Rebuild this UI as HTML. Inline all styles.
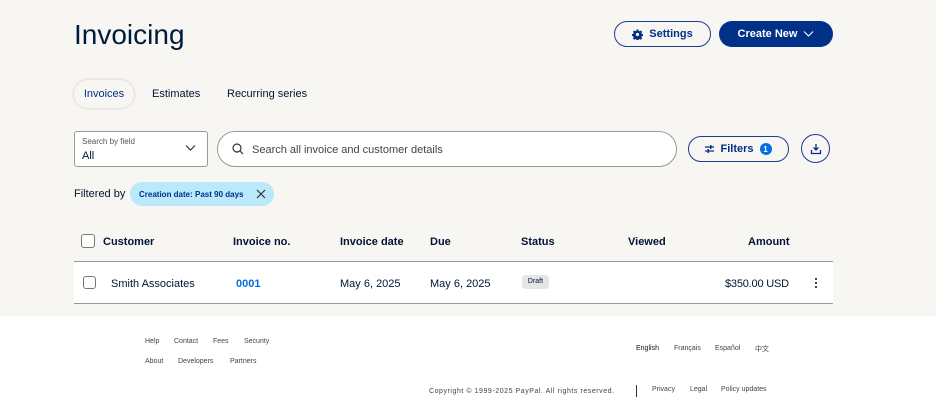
<!DOCTYPE html>
<html><head><meta charset="utf-8"><style>
*{box-sizing:border-box;margin:0;padding:0}
body{width:936px;height:410px;background:#fff;font-family:"Liberation Sans",sans-serif;color:#001435;position:relative;overflow:hidden}
.top{position:absolute;left:0;top:0;width:936px;height:316px;background:#f8f6f3}
.a{position:absolute;white-space:nowrap}
h1{position:absolute;left:74px;top:19px;font-size:28px;font-weight:400;color:#001c3d}
.btn{position:absolute;border-radius:14px;font-size:11px;font-weight:700;display:flex;align-items:center;justify-content:center;gap:6px}
.th{position:absolute;top:236px;font-size:11px;font-weight:700;color:#001435}
.td{position:absolute;top:278px;font-size:11px;color:#001435}
.cb{position:absolute;width:13px;height:13px;border:1px solid #777;border-radius:3px;background:#fff}
.f{position:absolute;font-size:7px;color:#444}
</style></head><body>
<div class="top"></div>
<h1>Invoicing</h1>
<div class="btn" style="left:614px;top:21px;width:97px;height:26px;border:1px solid #1d3f8a;color:#003087">
<svg width="11" height="11" viewBox="0 0 24 24"><path fill="#003087" fill-rule="evenodd" d="M10 1h4l.6 3 2.2.9 2.5-1.7 2.8 2.8-1.7 2.5.9 2.2 3 .6v4l-3 .6-.9 2.2 1.7 2.5-2.8 2.8-2.5-1.7-2.2.9-.6 3h-4l-.6-3-2.2-.9-2.5 1.7-2.8-2.8 1.7-2.5-.9-2.2-3-.6v-4l3-.6.9-2.2-1.7-2.5 2.8-2.8 2.5 1.7 2.2-.9zM12 8.5a3.5 3.5 0 1 0 0 7a3.5 3.5 0 0 0 0-7z"/></svg>Settings</div>
<div class="btn" style="left:719px;top:21px;width:114px;height:26px;background:#003087;color:#fff">Create New <svg width="11" height="8" viewBox="0 0 11 8"><path d="M1 1.5l4.5 4.5L10 1.5" stroke="#fff" stroke-width="1.1" fill="none"/></svg></div>
<div class="a" style="left:74px;top:80px;width:60px;height:28px;border-radius:14px;background:#f8f6f3;box-shadow:0 0 3px rgba(0,0,0,.2);font-size:11px;color:#003087;display:flex;align-items:center;justify-content:center">Invoices</div>
<div class="a" style="left:152px;top:88px;font-size:11px">Estimates</div>
<div class="a" style="left:227px;top:88px;font-size:11px">Recurring series</div>
<div class="a" style="left:74px;top:131px;width:134px;height:36px;border:1px solid #999;border-radius:3px;background:#fff">
<div class="a" style="left:7px;top:5px;font-size:8px;color:#555">Search by field</div>
<div class="a" style="left:7px;top:18px;font-size:11px">All</div>
<svg class="a" style="left:110px;top:12px" width="11" height="8" viewBox="0 0 11 8"><path d="M1 1.5l4.5 4.5L10 1.5" stroke="#333" stroke-width="1.2" fill="none"/></svg></div>
<div class="a" style="left:217px;top:131px;width:460px;height:36px;border:1px solid #999;border-radius:18px;background:#fff">
<svg class="a" style="left:14px;top:11px" width="12" height="12" viewBox="0 0 12 12"><circle cx="5" cy="5" r="4" stroke="#333" stroke-width="1.2" fill="none"/><path d="M8 8l3 3" stroke="#333" stroke-width="1.2"/></svg>
<div class="a" style="left:34px;top:12px;font-size:11px;color:#444">Search all invoice and customer details</div></div>
<div class="btn" style="left:688px;top:136px;width:101px;height:26px;border:1px solid #1d3f8a;color:#003087">
<svg width="9" height="8" viewBox="0 0 9 8"><path d="M0 2h9M0 6h9" stroke="#003087" stroke-width="1.3"/><rect x="5" y="0" width="1.5" height="4" fill="#003087"/><rect x="2.5" y="4" width="1.5" height="4" fill="#003087"/></svg>Filters<span style="width:12px;height:12px;border-radius:50%;background:#0070e0;color:#fff;font-size:8px;display:flex;align-items:center;justify-content:center">1</span></div>
<div class="a" style="left:801px;top:134px;width:29px;height:29px;border:1px solid #1d3f8a;border-radius:50%;display:flex;align-items:center;justify-content:center">
<svg width="12" height="12" viewBox="0 0 12 12"><path d="M6 1v6M3.5 4.5L6 7l2.5-2.5M1.5 7v3.5h9V7" stroke="#003087" stroke-width="1.3" fill="none"/></svg></div>
<div class="a" style="left:74px;top:188px;font-size:11px">Filtered by</div>
<div class="a" style="left:130px;top:182px;width:144px;height:24px;border-radius:12px;background:#b9e9fa;font-size:8px;font-weight:700;color:#003087;padding:8px 0 0 9px">Creation date: Past 90 days
<svg class="a" style="left:126px;top:7px" width="10" height="10" viewBox="0 0 10 10"><path d="M1 1l8 8M9 1l-8 8" stroke="#333" stroke-width="1.2"/></svg></div>
<div class="cb" style="left:81px;top:234px;width:14px;height:14px"></div>
<div class="th" style="left:103px">Customer</div>
<div class="th" style="left:233px">Invoice no.</div>
<div class="th" style="left:340px">Invoice date</div>
<div class="th" style="left:430px">Due</div>
<div class="th" style="left:521px">Status</div>
<div class="th" style="left:628px">Viewed</div>
<div class="th" style="left:748px">Amount</div>
<div class="a" style="left:74px;top:261px;width:759px;height:43px;background:#fff;border-top:1px solid #999;border-bottom:1px solid #999"></div>
<div class="cb" style="left:83px;top:276px"></div>
<div class="td" style="left:111px">Smith Associates</div>
<div class="td" style="left:236px;color:#0070e0;font-weight:700">0001</div>
<div class="td" style="left:340px">May 6, 2025</div>
<div class="td" style="left:430px">May 6, 2025</div>
<div class="a" style="left:522px;top:275px;width:27px;height:14px;border-radius:4px;background:#e5e5e5;font-size:7px;text-align:center;line-height:14px">Draft</div>
<div class="td" style="left:725px;letter-spacing:-0.2px">$350.00 USD</div>
<div class="a" style="left:815px;top:277px;width:2px;height:12px;background:radial-gradient(circle,#333 1px,transparent 1.2px) 0 0/2px 4px"></div>
<div class="f" style="left:145px;top:338px">Help</div><div class="f" style="left:174px;top:338px">Contact</div><div class="f" style="left:213px;top:338px">Fees</div><div class="f" style="left:244px;top:338px">Security</div>
<div class="f" style="left:145px;top:358px">About</div><div class="f" style="left:178px;top:358px">Developers</div><div class="f" style="left:230px;top:358px">Partners</div>
<div class="f" style="left:636px;top:345px;color:#111">English</div><div class="f" style="left:674px;top:345px">Français</div><div class="f" style="left:715px;top:345px">Español</div><div class="f" style="left:755px;top:344px;font-family:'Liberation Sans','Noto Sans CJK SC',sans-serif">中文</div>
<div class="f" style="left:429px;top:388px;letter-spacing:0.55px">Copyright © 1999-2025 PayPal. All rights reserved.</div>
<div class="a" style="left:636px;top:385px;width:1px;height:12px;background:#333"></div>
<div class="f" style="left:652px;top:386px">Privacy</div><div class="f" style="left:690px;top:386px">Legal</div><div class="f" style="left:721px;top:386px">Policy updates</div>
</body></html>
